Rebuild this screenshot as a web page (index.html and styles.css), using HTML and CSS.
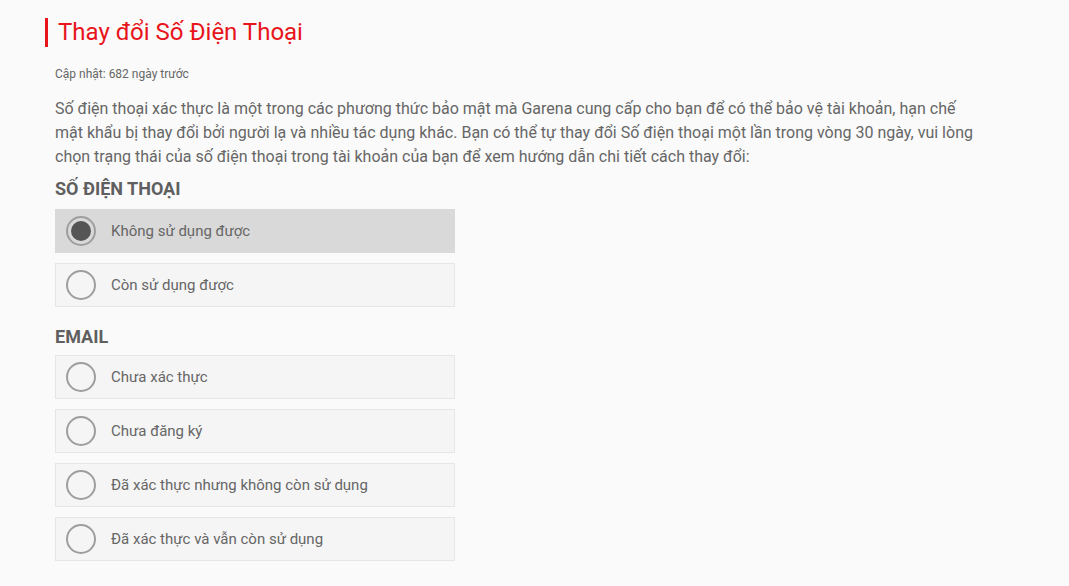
FILE: index.html
```html
<!DOCTYPE html>
<html lang="vi">
<head>
<meta charset="utf-8">
<link rel="stylesheet" href="styles.css">
</head>
<body>
<div class="page">
  <h1 class="title">Thay đổi Số Điện Thoại</h1>
  <div class="updated">Cập nhật: 682 ngày trước</div>
  <p class="desc">Số điện thoại xác thực là một trong các phương thức bảo mật mà Garena cung cấp cho bạn để có thể bảo vệ tài khoản, hạn chế mật khẩu bị thay đổi bởi người lạ và nhiều tác dụng khác. Bạn có thể tự thay đổi Số điện thoại một lần trong vòng 30 ngày, vui lòng chọn trạng thái của số điện thoại trong tài khoản của bạn để xem hướng dẫn chi tiết cách thay đổi:</p>
  <h2 class="group">SỐ ĐIỆN THOẠI</h2>
  <div class="options">
    <div class="option selected"><span class="radio"></span><span class="label">Không sử dụng được</span></div>
    <div class="option"><span class="radio"></span><span class="label">Còn sử dụng được</span></div>
  </div>
  <h2 class="group group-email">EMAIL</h2>
  <div class="options">
    <div class="option"><span class="radio"></span><span class="label">Chưa xác thực</span></div>
    <div class="option"><span class="radio"></span><span class="label">Chưa đăng ký</span></div>
    <div class="option"><span class="radio"></span><span class="label">Đã xác thực nhưng không còn sử dụng</span></div>
    <div class="option"><span class="radio"></span><span class="label">Đã xác thực và vẫn còn sử dụng</span></div>
  </div>
</div>
</body>
</html>
```

FILE: styles.css
```css
html, body {
  margin: 0;
  padding: 0;
  background: #fafafa;
}
body {
  font-family: Roboto, "Noto Sans", "Liberation Sans", sans-serif;
  color: #666;
}
.page {
  padding: 18px 0 0 45px;
  width: 930px;
}
.title {
  margin: 0;
  border-left: 3px solid #e8141b;
  padding-left: 10px;
  font-size: 24px;
  font-weight: 400;
  line-height: 29px;
  color: #e8141b;
}
.updated {
  margin: 20px 0 0 10px;
  font-size: 12px;
  line-height: 14px;
  color: #666;
}
.desc {
  margin: 16px 0 0 10px;
  font-size: 16px;
  line-height: 24px;
  color: #666;
}
.group {
  margin: 10px 0 10px 10px;
  font-size: 18px;
  font-weight: 700;
  line-height: 20px;
  color: #5f5f5f;
}
.group.group-email {
  margin-bottom: 8px;
}
.options {
  display: flex;
  flex-direction: column;
  gap: 10px;
  margin-left: 10px;
  margin-bottom: 20px;
}
.options:last-child { margin-bottom: 0; }
.option {
  box-sizing: border-box;
  width: 400px;
  height: 44px;
  display: flex;
  align-items: center;
  gap: 15px;
  padding-left: 10px;
  background: #f5f5f5;
  border: 1px solid #e6e6e6;
}
.option.selected {
  background: #d9d9d9;
  border-color: #d9d9d9;
}
.radio {
  box-sizing: border-box;
  width: 30px;
  height: 30px;
  border-radius: 50%;
  border: 2px solid #9e9e9e;
  display: flex;
  align-items: center;
  justify-content: center;
  flex: none;
}
.selected .radio::after {
  content: "";
  width: 20px;
  height: 20px;
  border-radius: 50%;
  background: #555;
}
.label {
  font-size: 15px;
  color: #666;
}
```
